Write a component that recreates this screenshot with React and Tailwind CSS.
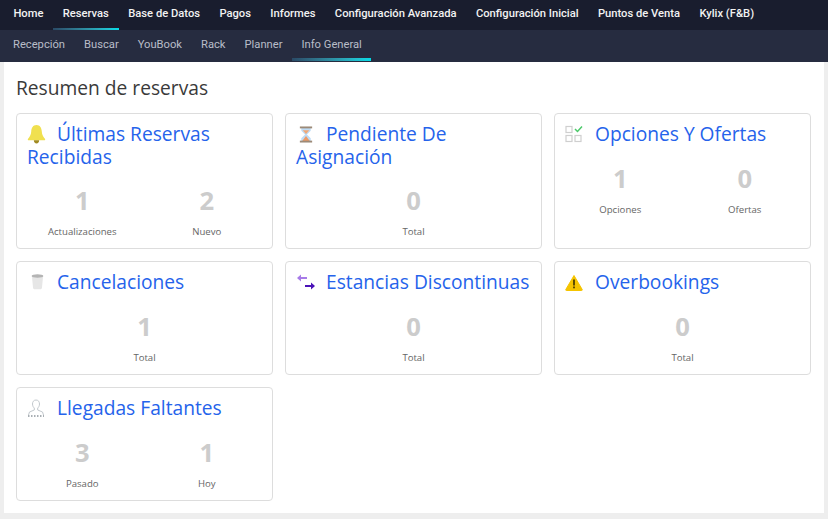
import React from "react";

const top = ["Home", "Reservas", "Base de Datos", "Pagos", "Informes", "Configuración Avanzada", "Configuración Inicial", "Puntos de Venta", "Kylix (F&B)"];
const sub = ["Recepción", "Buscar", "YouBook", "Rack", "Planner", "Info General"];

const Bell = () => (
  <svg width="19" height="20" viewBox="0 0 18 19">
    <path d="M9 1C5.600 1 4.200 3.800 4 7c-.2 3-1 5-3 7-.6.700-.2 1.500.6 1.500h14.800c.8 0 1.200-.8.6-1.500-2-2-2.800-4-3-7C13.800 3.800 12.400 1 9 1z" fill="#f0e04f" />
    <path d="M6.500 15.500h5c0 2-1 3-2.500 3s-2.500-1-2.500-3z" fill="#a08a20" />
  </svg>
);
const Hourglass = () => (
  <svg width="16" height="17" viewBox="2 1 14 18" className="ml-[2px]">
    <path d="M4 3h10v3l-4 4 4 4v3H4v-3l4-4-4-4z" fill="#bfdcf5" />
    <path d="M5.500 5.500h7L9 9.500z" fill="#f0a878" />
    <path d="M9 11.500 13 17H5z" fill="#ee9a66" />
    <rect x="2.500" y="1.500" width="13" height="2" fill="#9c8a78" />
    <rect x="2.500" y="16.500" width="13" height="2" fill="#9c8a78" />
  </svg>
);
const Options = () => (
  <svg width="18" height="18" viewBox="0 0 18 18" fill="none">
    <rect x="1" y="1.500" width="6" height="6" stroke="#cfcfcf" strokeWidth="1.200" />
    <rect x="1" y="10.500" width="6" height="6" stroke="#cfcfcf" strokeWidth="1.200" />
    <rect x="10" y="10.500" width="6" height="6" stroke="#cfcfcf" strokeWidth="1.200" />
    <path d="M10 4l2.500 2.500L17 1.500" stroke="#4cc96a" strokeWidth="1.500" />
  </svg>
);
const Trash = () => (
  <svg width="13" height="16" viewBox="1 1 14 17" className="ml-[4px]">
    <path d="M2 3h12l-1.200 13c-.1.800-.6 1.200-1.300 1.200h-7c-.7 0-1.200-.4-1.300-1.200z" fill="#e6e6e6" />
    <ellipse cx="8" cy="3" rx="6.300" ry="1.800" fill="#b4b4b4" />
  </svg>
);
const Arrows = () => (
  <svg width="20" height="18" viewBox="0 0 20 18" fill="none">
    <path d="M11 5H2" stroke="#a77be8" strokeWidth="2" />
    <path d="M5 1.500 1 5l4 3.500z" fill="#a77be8" />
    <path d="M9 13h9" stroke="#4b12b8" strokeWidth="2" />
    <path d="M15 9.500 19 13l-4 3.500z" fill="#4b12b8" />
  </svg>
);
const Warn = () => (
  <svg width="18" height="17" viewBox="0 0 18 17">
    <path d="M9 1.500 17.200 15.500c.2.500 0 1-.6 1H1.400c-.6 0-.8-.5-.6-1z" fill="#f5c400" stroke="#f5c400" strokeLinejoin="round" />
    <rect x="8.200" y="5.500" width="1.600" height="6" fill="#3a3000" />
    <rect x="8.200" y="12.500" width="1.600" height="1.800" fill="#3a3000" />
  </svg>
);
const Person = () => (
  <svg width="18" height="18" viewBox="0 0 18 18" fill="none" stroke="#c2c8cd" strokeWidth="1">
    <path d="M9 1c-2.500 0-3.500 2-3.500 4 0 1.800.8 3.200 1.800 4v2L2.500 13 1.500 16" />
    <path d="M9 1c2.500 0 3.500 2 3.500 4 0 1.800-.8 3.200-1.800 4v2l4.800 2 1 3" />
    <path d="M1 17h16" strokeDasharray="1.500 1.500" strokeWidth="1.500" stroke="#8d959c" />
  </svg>
);

function Stat({ n, label }) {
  return (
    <div className="flex-1 flex flex-col items-center">
      <div className="text-[25.600px] leading-[37px] font-bold text-[#cccccc]">{n}</div>
      <div className="text-[9.600px] leading-[14px] mt-[6px] text-[#666666]">{label}</div>
    </div>
  );
}

function Card({ icon, title, stats, h, mt }) {
  return (
    <div className={`bg-white border border-[#dddddd] rounded-[4px] px-[10px] pt-[8px] ${h} flex flex-col`}>
      <div className="text-[19.200px] leading-[23px] text-[#2563eb]">
        <span className="inline-block w-[30px] h-[20px] align-[-3px] overflow-hidden">
          <span className="flex h-full items-center">{icon}</span>
        </span>
        {title}
      </div>
      <div className={`flex ${mt} mx-[-7px]`}>
        {stats.map(([n, l]) => <Stat key={l} n={n} label={l} />)}
      </div>
    </div>
  );
}

export default function App() {
  return (
    <div className="w-[828px] h-[519px] bg-[#eeeeee] overflow-hidden font-['Open_Sans',sans-serif]">
      <nav className="h-[30px] bg-[#191d2e] flex px-[3.700px] font-['Roboto',sans-serif] text-[11.200px] font-medium text-[#f2f2f2]">
        {top.map((t) => (
          <div key={t} className="relative px-[9.700px] leading-[27px] whitespace-nowrap">
            {t}
            {t === "Reservas" && <span className="absolute left-0 right-0 bottom-0 h-[2px] bg-gradient-to-r from-[#2a4a66] to-[#00dbe6]" />}
          </div>
        ))}
      </nav>
      <nav className="h-[32px] bg-[#262c40] flex px-[3.500px] font-['Roboto',sans-serif] text-[11.200px] text-[#b9bdc8]">
        {sub.map((t) => (
          <div key={t} className="relative px-[9.500px] leading-[30px] whitespace-nowrap">
            {t}
            {t === "Info General" && <span className="absolute left-0 right-0 bottom-[1px] h-[3px] bg-gradient-to-r from-[#2a4a66] to-[#00dbe6]" />}
          </div>
        ))}
      </nav>
      <main className="mx-[4px] h-[451px] bg-white px-[12px]">
        <h1 className="text-[19.200px] leading-[27px] pt-[12px] h-[51px] box-border text-[#3a3a3a] font-normal">Resumen de reservas</h1>
        <div className="grid grid-cols-[257px_257px_257px] gap-x-[12px] gap-y-[12px]">
          <Card h="h-[136px]" mt="mt-[14px]" icon={<Bell />} title="Últimas Reservas Recibidas" stats={[["1", "Actualizaciones"], ["2", "Nuevo"]]} />
          <Card h="h-[136px]" mt="mt-[14px]" icon={<Hourglass />} title="Pendiente De Asignación" stats={[["0", "Total"]]} />
          <Card h="h-[136px]" mt="mt-[15px]" icon={<Options />} title="Opciones Y Ofertas" stats={[["1", "Opciones"], ["0", "Ofertas"]]} />
          <Card h="h-[114px]" mt="mt-[15px]" icon={<Trash />} title="Cancelaciones" stats={[["1", "Total"]]} />
          <Card h="h-[114px]" mt="mt-[15px]" icon={<Arrows />} title="Estancias Discontinuas" stats={[["0", "Total"]]} />
          <Card h="h-[114px]" mt="mt-[15px]" icon={<Warn />} title="Overbookings" stats={[["0", "Total"]]} />
          <Card h="h-[114px]" mt="mt-[15px]" icon={<Person />} title="Llegadas Faltantes" stats={[["3", "Pasado"], ["1", "Hoy"]]} />
        </div>
      </main>
    </div>
  );
}
